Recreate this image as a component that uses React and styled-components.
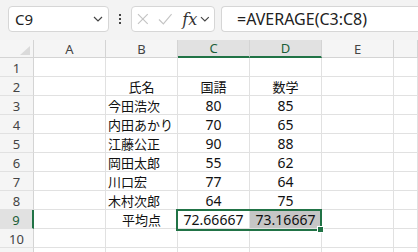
import React from 'react';
import styled, {createGlobalStyle} from 'styled-components';

const GREEN = '#217346';

const Global = createGlobalStyle`
  body {
    margin: 0;
    background: #ffffff;
    font-family: "Noto Sans", "Noto Sans CJK JP", sans-serif;
  }
`;

const Page = styled.div`
  width: 418px;
  height: 252px;
  overflow: hidden;
  background: #ffffff;
`;

const Toolbar = styled.div`
  height: 40px;
  box-sizing: border-box;
  padding: 6px 0 0 8px;
  display: flex;
  align-items: flex-start;
  background: #f3f3f3;
`;

const Box = styled.div`
  height: 26px;
  box-sizing: border-box;
  background: #ffffff;
  border: 1px solid #d6d6d6;
  border-radius: 4px;
  display: flex;
  align-items: center;
`;

const NameBox = styled(Box)`
  width: 101px;
  padding: 0 5px 0 6px;
  justify-content: space-between;
  font-size: 15px;
  color: #222;
`;

const Dots = styled.div`
  width: 22px;
  height: 26px;
  display: flex;
  flex-direction: column;
  align-items: center;
  justify-content: center;
  gap: 2px;
  span {
    width: 2px;
    height: 2px;
    background: #444;
  }
`;

const FxBox = styled(Box)`
  width: 84px;
  padding: 0 4px 0 5px;
  gap: 9px;
`;

const Fx = styled.span`
  font-family: "DejaVu Serif", "Liberation Serif", serif;
  font-style: italic;
  font-size: 16px;
  color: #333;
  margin-left: 1px;
  margin-right: -6px;
`;

const FormulaBox = styled(Box)`
  flex: 1;
  margin-left: 6px;
  border-right: none;
  border-radius: 4px 0 0 4px;
  padding-left: 15px;
  font-size: 16px;
  color: #222;
`;

const Sheet = styled.div`
  position: relative;
  display: grid;
  grid-template-columns: 34px repeat(5, 72px) 1fr;
  grid-template-rows: 18px;
  grid-auto-rows: 19px;
`;

const Corner = styled.div`
  background: #f5f5f5;
  border-right: 1px solid #d4d4d4;
  border-bottom: 1px solid #d4d4d4;
  position: relative;
  &::after {
    content: '';
    position: absolute;
    right: 3px;
    bottom: 2px;
    border-left: 10px solid transparent;
    border-bottom: 9px solid #dadada;
  }
`;

const ColHead = styled.div`
  box-sizing: border-box;
  display: flex;
  align-items: center;
  justify-content: center;
  font-size: 13px;
  background: ${p => (p.$sel ? '#e1e1e1' : '#f5f5f5')};
  color: ${p => (p.$sel ? '#1c5e38' : '#444')};
  border-right: 1px solid #d4d4d4;
  border-bottom: ${p => (p.$sel ? `2px solid ${GREEN}` : '1px solid #d4d4d4')};
`;

const RowHead = styled.div`
  box-sizing: border-box;
  display: flex;
  align-items: center;
  justify-content: center;
  padding-top: 1px;
  font-size: 13px;
  background: ${p => (p.$sel ? '#e1e1e1' : '#f5f5f5')};
  color: ${p => (p.$sel ? '#1c5e38' : '#444')};
  border-right: ${p => (p.$sel ? `2px solid ${GREEN}` : '1px solid #d4d4d4')};
  border-bottom: 1px solid #e1e1e1;
`;

const Cell = styled.div`
  box-sizing: border-box;
  display: flex;
  align-items: center;
  justify-content: ${p => (p.$left ? 'flex-start' : 'center')};
  padding-left: ${p => (p.$left ? '2px' : '0')};
  font-size: ${p => (p.$jp ? '13px' : '14px')};
  color: #111;
  white-space: nowrap;
  background: ${p => (p.$fill ? '#c6c6c6' : '#ffffff')};
  border-right: 1px solid #e1e1e1;
  border-bottom: 1px solid #e1e1e1;
`;

const Selection = styled.div`
  position: absolute;
  grid-column: 4 / 6;
  grid-row: 10 / 11;
  top: -1px;
  bottom: -2px;
  left: -2px;
  right: 0;
  border: 2px solid ${GREEN};
  pointer-events: none;
  &::after {
    content: '';
    position: absolute;
    right: -4px;
    bottom: -4px;
    width: 5px;
    height: 5px;
    background: ${GREEN};
    border: 1px solid #ffffff;
  }
`;

const Chevron = () => (
  <svg width="10" height="6" viewBox="0 0 10 6">
    <path d="M1 1l4 4 4-4" fill="none" stroke="#444" strokeWidth="1.2" />
  </svg>
);

const Cross = () => (
  <svg width="12" height="12" viewBox="0 0 12 12">
    <path d="M1 1l10 10M11 1L1 11" stroke="#c4c4c4" strokeWidth="1.2" />
  </svg>
);

const Check = () => (
  <svg width="15" height="12" viewBox="0 0 15 12">
    <path d="M1 6.5l4.5 4.5L14 1" fill="none" stroke="#c4c4c4" strokeWidth="1.2" />
  </svg>
);

const cols = ['A', 'B', 'C', 'D', 'E', ''];

const rows = [
  ['', '', '', ''],
  ['', '氏名', '国語', '数学'],
  ['', '今田浩次', '80', '85'],
  ['', '内田あかり', '70', '65'],
  ['', '江藤公正', '90', '88'],
  ['', '岡田太郎', '55', '62'],
  ['', '川口宏', '77', '64'],
  ['', '木村次郎', '64', '75'],
  ['', '平均点', '72.66667', '73.16667'],
  ['', '', '', ''],
  ['', '', '', ''],
];

const App = () => (
  <Page>
    <Global />
    <Toolbar>
      <NameBox>
        <span>C9</span>
        <Chevron />
      </NameBox>
      <Dots><span /><span /><span /></Dots>
      <FxBox>
        <Cross />
        <Check />
        <Fx>fx</Fx>
        <Chevron />
      </FxBox>
      <FormulaBox>=AVERAGE(C3:C8)</FormulaBox>
    </Toolbar>
    <Sheet>
      <Corner />
      {cols.map((c, i) => (
        <ColHead key={i} $sel={c === 'C' || c === 'D'}>{c}</ColHead>
      ))}
      {rows.map((r, i) => (
        <React.Fragment key={i}>
          <RowHead $sel={i === 8}>{i < 10 ? i + 1 : ''}</RowHead>
          {r.map((v, j) => (
            <Cell
              key={j}
              $jp={j === 1 || i === 1}
              $left={j === 1 && i >= 2 && i <= 7}
              $fill={i === 8 && j === 3}
            >
              {v}
            </Cell>
          ))}
          <Cell />
          <Cell />
        </React.Fragment>
      ))}
      <Selection />
    </Sheet>
  </Page>
);

export default App;
